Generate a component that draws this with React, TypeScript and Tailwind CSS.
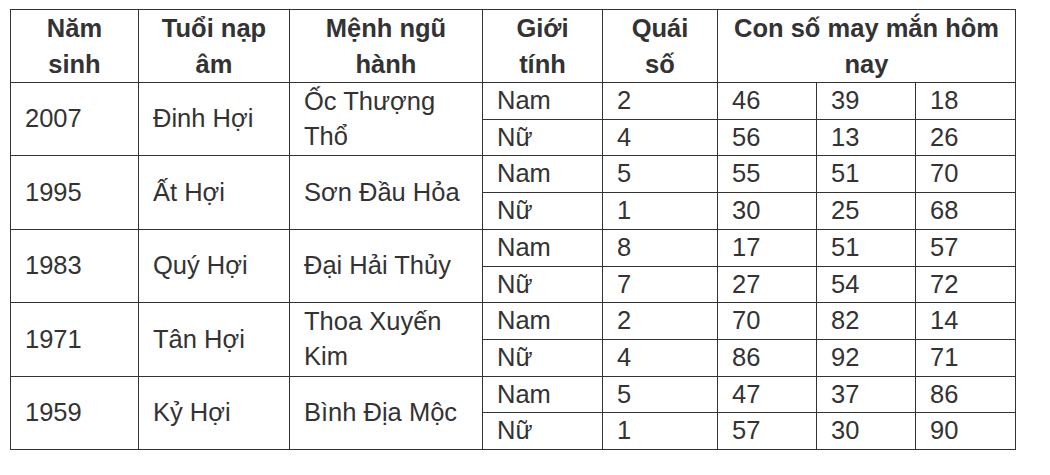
import React from 'react';

type Row = {
  year: string;
  napAm: string;
  menh: string;
  nam: { quai: string; nums: string[] };
  nu: { quai: string; nums: string[] };
};

const ROWS: Row[] = [
  { year: '2007', napAm: 'Đinh Hợi', menh: 'Ốc Thượng Thổ', nam: { quai: '2', nums: ['46', '39', '18'] }, nu: { quai: '4', nums: ['56', '13', '26'] } },
  { year: '1995', napAm: 'Ất Hợi', menh: 'Sơn Đầu Hỏa', nam: { quai: '5', nums: ['55', '51', '70'] }, nu: { quai: '1', nums: ['30', '25', '68'] } },
  { year: '1983', napAm: 'Quý Hợi', menh: 'Đại Hải Thủy', nam: { quai: '8', nums: ['17', '51', '57'] }, nu: { quai: '7', nums: ['27', '54', '72'] } },
  { year: '1971', napAm: 'Tân Hợi', menh: 'Thoa Xuyến Kim', nam: { quai: '2', nums: ['70', '82', '14'] }, nu: { quai: '4', nums: ['86', '92', '71'] } },
  { year: '1959', napAm: 'Kỷ Hợi', menh: 'Bình Địa Mộc', nam: { quai: '5', nums: ['47', '37', '86'] }, nu: { quai: '1', nums: ['57', '30', '90'] } },
];

const th = 'border border-[#333] px-[15px] py-0 text-center font-bold leading-[36px] align-middle';
const td = 'border border-[#333] pl-[14px] pr-[8px] py-0 text-left font-normal leading-[35.7px] align-middle';

const App: React.FC = () => {
  return (
    <div className="min-h-screen bg-white pt-[9px] pl-[10px] text-[#333] text-[25.5px]" style={{ fontFamily: '"Liberation Sans", Arial, sans-serif' }}>
      <table className="table-fixed border-collapse w-[1005px]">
        <colgroup>
          <col className="w-[128px]" />
          <col className="w-[151px]" />
          <col className="w-[193px]" />
          <col className="w-[120px]" />
          <col className="w-[115px]" />
          <col className="w-[99px]" />
          <col className="w-[99px]" />
          <col className="w-[100px]" />
        </colgroup>
        <thead>
          <tr>
            <th className={th}>Năm sinh</th>
            <th className={th}>Tuổi nạp âm</th>
            <th className={th}>Mệnh ngũ hành</th>
            <th className={th}>Giới tính</th>
            <th className={th}>Quái số</th>
            <th className={th} colSpan={3}>Con số may mắn hôm nay</th>
          </tr>
        </thead>
        <tbody>
          {ROWS.map((r) => (
            <React.Fragment key={r.year}>
              <tr>
                <td className={td} rowSpan={2}>{r.year}</td>
                <td className={td} rowSpan={2}>{r.napAm}</td>
                <td className={td} rowSpan={2}>{r.menh}</td>
                <td className={td}>Nam</td>
                <td className={td}>{r.nam.quai}</td>
                {r.nam.nums.map((n, i) => (
                  <td key={i} className={td}>{n}</td>
                ))}
              </tr>
              <tr>
                <td className={td}>Nữ</td>
                <td className={td}>{r.nu.quai}</td>
                {r.nu.nums.map((n, i) => (
                  <td key={i} className={td}>{n}</td>
                ))}
              </tr>
            </React.Fragment>
          ))}
        </tbody>
      </table>
    </div>
  );
};

export default App;
